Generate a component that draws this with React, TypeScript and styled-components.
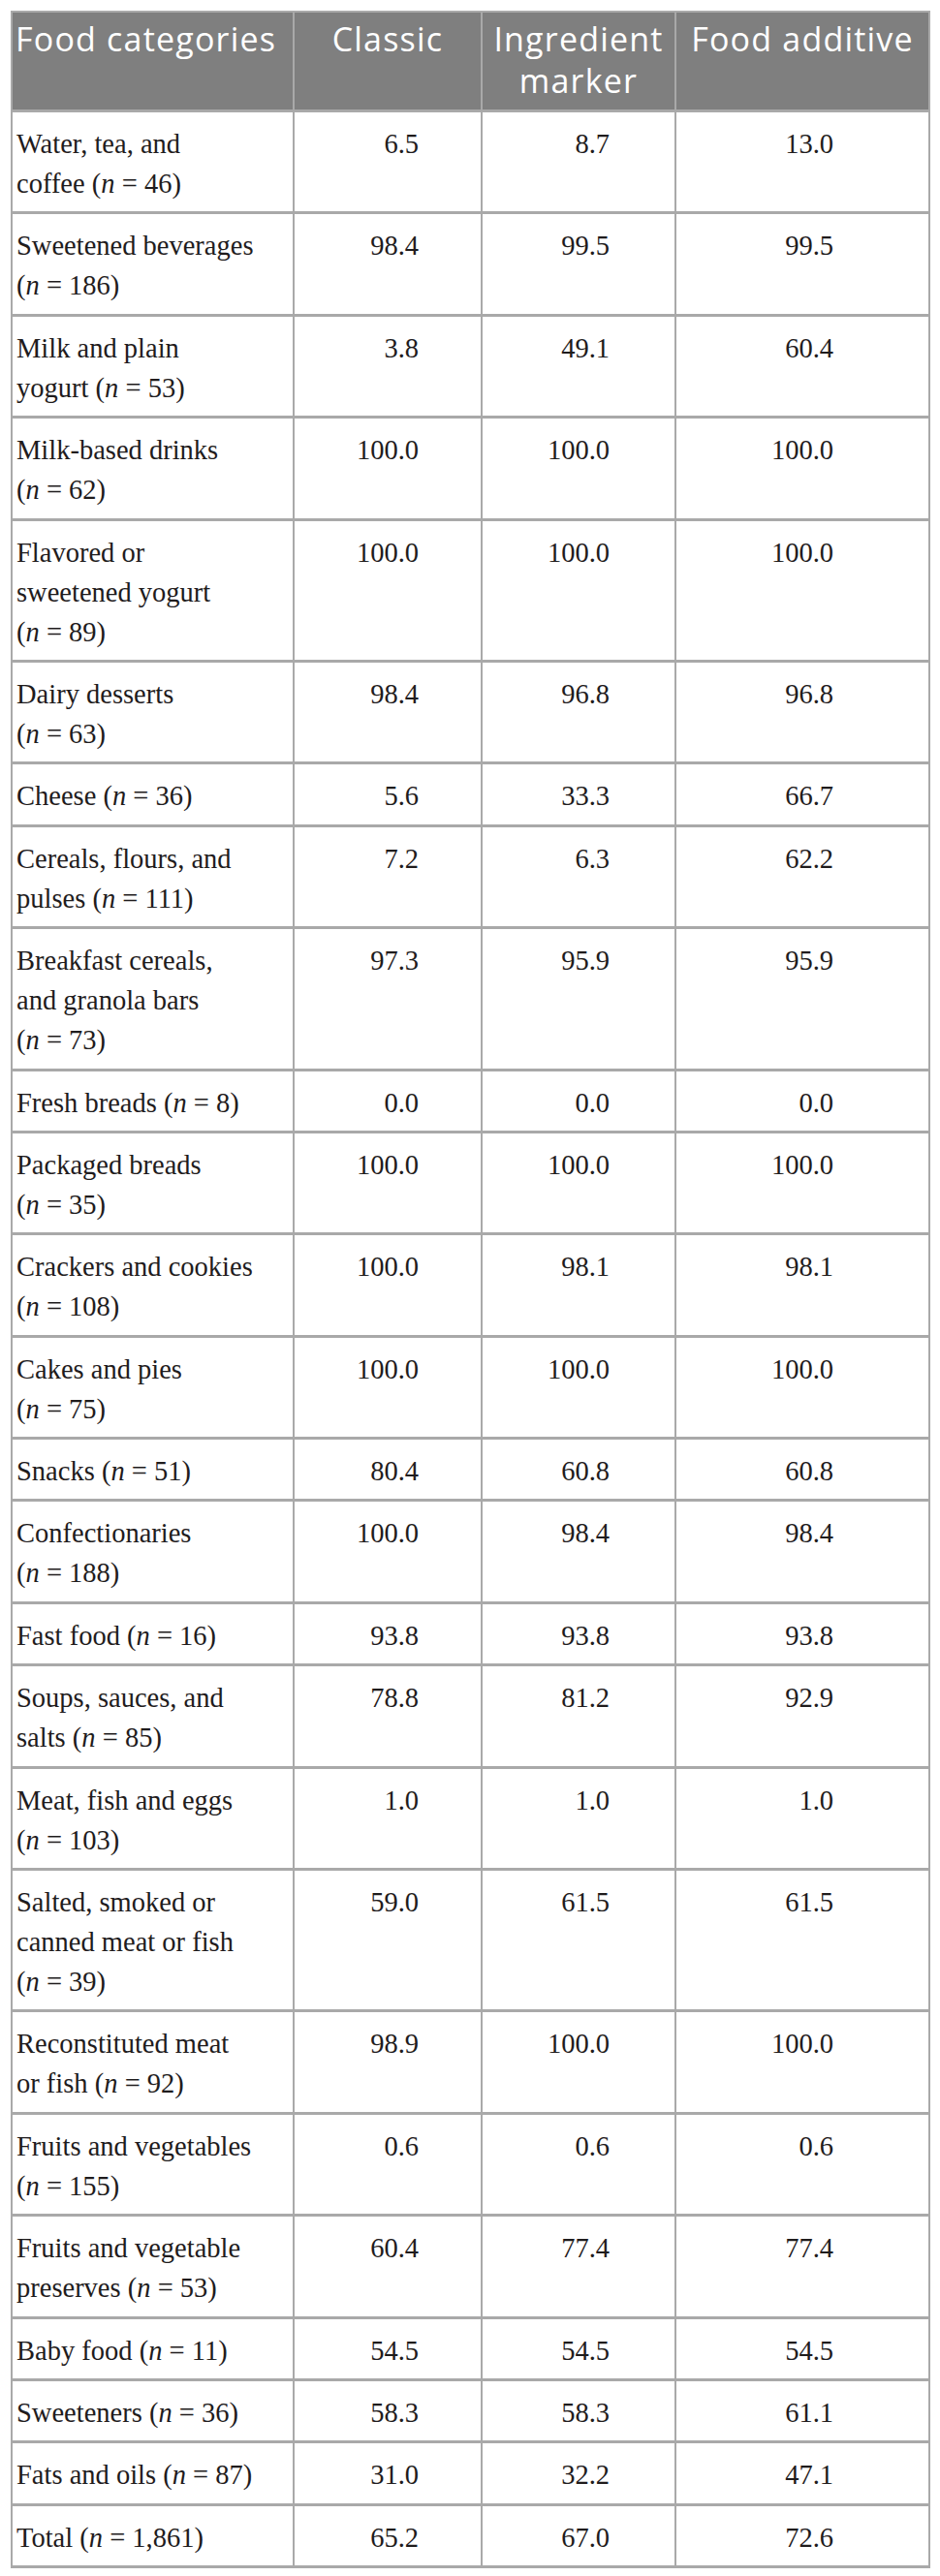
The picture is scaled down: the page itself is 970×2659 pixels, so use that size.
import React from "react";
import styled, { createGlobalStyle } from "styled-components";

interface FoodRow {
  lines: string[];
  n: string;
  values: [string, string, string];
}

const GlobalStyle = createGlobalStyle`
  body {
    margin: 0;
    background: #ffffff;
    font-family: "Liberation Serif", "Times New Roman", serif;
  }
`;

const Page = styled.div`
  padding: 11px 12px 10px 11px;
`;

const Table = styled.table`
  width: 947px;
  border-collapse: collapse;
  table-layout: fixed;
  color: #1f1c1d;
`;

const HeadCell = styled.th<{ $align?: "left" | "center" }>`
  background: #7f7f7f;
  color: #ffffff;
  font-family: "Open Sans", "Noto Sans", sans-serif;
  font-weight: 400;
  font-size: 34px;
  line-height: 43px;
  letter-spacing: 1.2px;
  text-align: ${(p) => p.$align ?? "center"};
  vertical-align: top;
  padding: 6px 3px 8px;
  border: 2px solid #a9a9a9;
  border-bottom-width: 3px;
`;

const Cell = styled.td`
  font-family: "Liberation Serif", "Times New Roman", serif;
  font-size: 28.5px;
  line-height: 41px;
  color: #1f1c1d;
  vertical-align: top;
  padding: 12px 4px 8.4px;
  border-left: 2px solid #a9a9a9;
  border-right: 2px solid #a9a9a9;
  border-bottom: 3px solid #a9a9a9;
  white-space: nowrap;
`;

const LabelCell = styled(Cell)`
  text-align: left;
`;

const NumCell = styled(Cell)`
  text-align: center;
`;

/* keeps the decimals lined up: every value is right-aligned in a box as wide as "100.0" */
const Num = styled.span`
  display: inline-block;
  min-width: 4.5ch;
  text-align: right;
`;

const Italic = styled.i`
  font-style: italic;
`;

const rows: FoodRow[] = [
  { lines: ["Water, tea, and", "coffee"], n: "46", values: ["6.5", "8.7", "13.0"] },
  { lines: ["Sweetened beverages", ""], n: "186", values: ["98.4", "99.5", "99.5"] },
  { lines: ["Milk and plain", "yogurt"], n: "53", values: ["3.8", "49.1", "60.4"] },
  { lines: ["Milk-based drinks", ""], n: "62", values: ["100.0", "100.0", "100.0"] },
  { lines: ["Flavored or", "sweetened yogurt", ""], n: "89", values: ["100.0", "100.0", "100.0"] },
  { lines: ["Dairy desserts", ""], n: "63", values: ["98.4", "96.8", "96.8"] },
  { lines: ["Cheese"], n: "36", values: ["5.6", "33.3", "66.7"] },
  { lines: ["Cereals, flours, and", "pulses"], n: "111", values: ["7.2", "6.3", "62.2"] },
  { lines: ["Breakfast cereals,", "and granola bars", ""], n: "73", values: ["97.3", "95.9", "95.9"] },
  { lines: ["Fresh breads"], n: "8", values: ["0.0", "0.0", "0.0"] },
  { lines: ["Packaged breads", ""], n: "35", values: ["100.0", "100.0", "100.0"] },
  { lines: ["Crackers and cookies", ""], n: "108", values: ["100.0", "98.1", "98.1"] },
  { lines: ["Cakes and pies", ""], n: "75", values: ["100.0", "100.0", "100.0"] },
  { lines: ["Snacks"], n: "51", values: ["80.4", "60.8", "60.8"] },
  { lines: ["Confectionaries", ""], n: "188", values: ["100.0", "98.4", "98.4"] },
  { lines: ["Fast food"], n: "16", values: ["93.8", "93.8", "93.8"] },
  { lines: ["Soups, sauces, and", "salts"], n: "85", values: ["78.8", "81.2", "92.9"] },
  { lines: ["Meat, fish and eggs", ""], n: "103", values: ["1.0", "1.0", "1.0"] },
  { lines: ["Salted, smoked or", "canned meat or fish", ""], n: "39", values: ["59.0", "61.5", "61.5"] },
  { lines: ["Reconstituted meat", "or fish"], n: "92", values: ["98.9", "100.0", "100.0"] },
  { lines: ["Fruits and vegetables", ""], n: "155", values: ["0.6", "0.6", "0.6"] },
  { lines: ["Fruits and vegetable", "preserves"], n: "53", values: ["60.4", "77.4", "77.4"] },
  { lines: ["Baby food"], n: "11", values: ["54.5", "54.5", "54.5"] },
  { lines: ["Sweeteners"], n: "36", values: ["58.3", "58.3", "61.1"] },
  { lines: ["Fats and oils"], n: "87", values: ["31.0", "32.2", "47.1"] },
  { lines: ["Total"], n: "1,861", values: ["65.2", "67.0", "72.6"] },
];

const Label = ({ lines, n }: { lines: string[]; n: string }) => {
  const last = lines[lines.length - 1];
  return (
    <>
      {lines.slice(0, -1).map((line, idx) => (
        <React.Fragment key={idx}>
          {line}
          <br />
        </React.Fragment>
      ))}
      {last ? `${last} ` : ""}(<Italic>n</Italic> = {n})
    </>
  );
};

export default function App() {
  return (
    <Page>
      <GlobalStyle />
      <Table>
        <colgroup>
          <col style={{ width: 291 }} />
          <col style={{ width: 194 }} />
          <col style={{ width: 200 }} />
          <col style={{ width: 262 }} />
        </colgroup>
        <thead>
          <tr>
            <HeadCell $align="left">Food categories</HeadCell>
            <HeadCell>Classic</HeadCell>
            <HeadCell>
              Ingredient
              <br />
              marker
            </HeadCell>
            <HeadCell>Food additive</HeadCell>
          </tr>
        </thead>
        <tbody>
          {rows.map((row) => (
            <tr key={row.lines[0]}>
              <LabelCell>
                <Label lines={row.lines} n={row.n} />
              </LabelCell>
              {row.values.map((v, idx) => (
                <NumCell key={idx}>
                  <Num>{v}</Num>
                </NumCell>
              ))}
            </tr>
          ))}
        </tbody>
      </Table>
    </Page>
  );
}
